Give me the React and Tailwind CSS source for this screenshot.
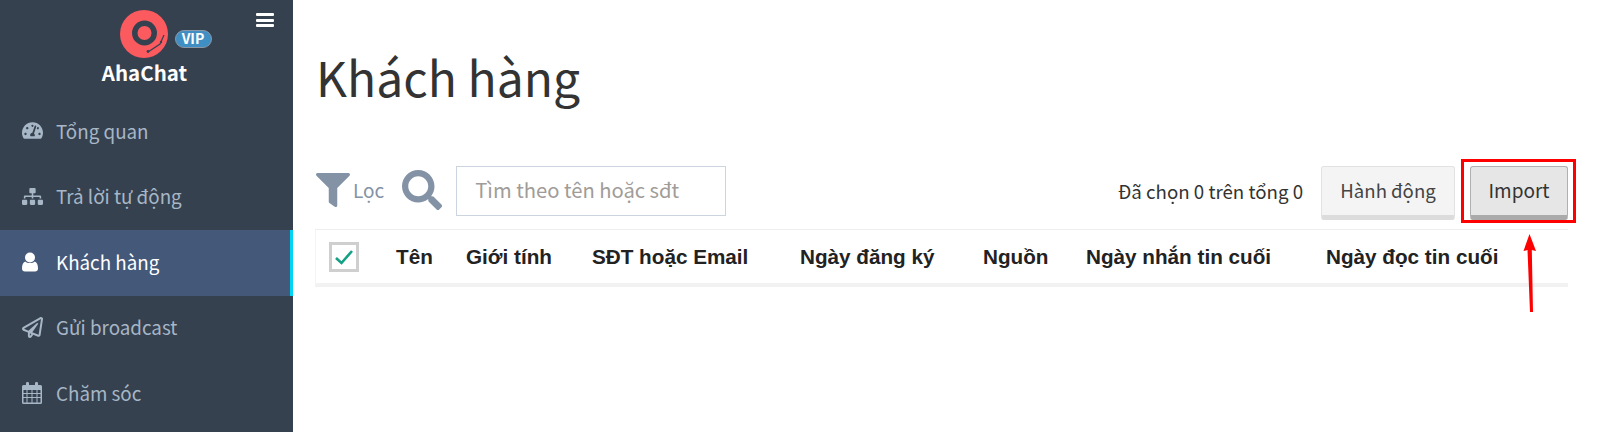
import { FaTachometerAlt, FaSitemap, FaRegPaperPlane, FaFilter, FaSearch } from 'react-icons/fa';

const UserIcon = ({ className }) => (
  <svg viewBox="0 0 16 20" className={className} fill="currentColor">
    <circle cx="8" cy="5.5" r="5" />
    <path d="M3.2 9.5 C5.5 11.6 10.5 11.6 12.8 9.5 C15 10.3 16 13 16 16.5 C16 18.6 14.8 19.5 13 19.5 L3 19.5 C1.2 19.5 0 18.6 0 16.5 C0 13 1 10.3 3.2 9.5 Z" />
  </svg>
);

const CalendarIcon = ({ className }) => (
  <svg viewBox="0 0 20 22" className={className} fill="currentColor">
    <path fillRule="evenodd" d="M1.5 3 H18.5 A1.5 1.5 0 0 1 20 4.5 V20.5 A1.5 1.5 0 0 1 18.5 22 H1.5 A1.5 1.5 0 0 1 0 20.5 V4.5 A1.5 1.5 0 0 1 1.5 3 Z M1.5 8 V11 H4.5 V8 Z M5.5 8 V11 H9.5 V8 Z M10.5 8 V11 H14.5 V8 Z M15.5 8 V11 H18.5 V8 Z M1.5 12 V15 H4.5 V12 Z M5.5 12 V15 H9.5 V12 Z M10.5 12 V15 H14.5 V12 Z M15.5 12 V15 H18.5 V12 Z M1.5 16 V20.5 H4.5 V16 Z M5.5 16 V20.5 H9.5 V16 Z M10.5 16 V20.5 H14.5 V16 Z M15.5 16 V20.5 H18.5 V16 Z" />
    <rect x="4" y="0" width="3" height="6" rx="1.2" />
    <rect x="13" y="0" width="3" height="6" rx="1.2" />
  </svg>
);

const menu = [
  { label: 'Tổng quan', icon: FaTachometerAlt },
  { label: 'Trả lời tự động', icon: FaSitemap },
  { label: 'Khách hàng', icon: UserIcon, active: true, iconSize: 'w-[16px] h-[20px]' },
  { label: 'Gửi broadcast', icon: FaRegPaperPlane },
  { label: 'Chăm sóc', icon: CalendarIcon, iconSize: 'w-[20px] h-[22px]' },
];

const columns = [
  { label: 'Tên', width: 'w-[70px]' },
  { label: 'Giới tính', width: 'w-[126px]' },
  { label: 'SĐT hoặc Email', width: 'w-[208px]' },
  { label: 'Ngày đăng ký', width: 'w-[183px]' },
  { label: 'Nguồn', width: 'w-[103px]' },
  { label: 'Ngày nhắn tin cuối', width: 'w-[240px]' },
  { label: 'Ngày đọc tin cuối', width: 'w-[240px]' },
];

const Logo = () => (
  <svg width="48" height="48" viewBox="0 0 48 48" className="shrink-0">
    <circle cx="24" cy="24" r="24" fill="#fb5a5f" />
    <circle cx="24.5" cy="23" r="9.75" fill="none" stroke="#364150" strokeWidth="5.5" />
    <path d="M44 25 L40 34 L28 42" fill="none" stroke="#364150" strokeWidth="1.2" />
    <circle cx="28" cy="41.5" r="1.4" fill="#364150" />
    <circle cx="41" cy="32" r="1.2" fill="#364150" />
  </svg>
);

const Sidebar = () => (
  <aside className="w-[293px] h-[432px] shrink-0 bg-[#364150] overflow-hidden">
    <div className="h-[102px] relative flex flex-col items-center pt-[10px]">
      <div className="flex items-start ml-[38px]">
        <Logo />
        <span className="ml-[7px] mt-[20px] w-[37px] h-[18px] leading-[14px] text-center rounded-[9px] border border-[#8a97a5] bg-[#3f8fc4] text-white text-[14px] font-bold">VIP</span>
      </div>
      <div className="mt-[-1px] mr-[4px] text-white text-[20.5px] leading-[30px] font-semibold">AhaChat</div>
      <div className="absolute top-[13px] right-[19px] w-[18px] flex flex-col gap-[2.5px]">
        <span className="h-[3px] bg-white rounded-[1px]" />
        <span className="h-[3px] bg-white rounded-[1px]" />
        <span className="h-[3px] bg-white rounded-[1px]" />
      </div>
    </div>
    <nav className="flex flex-col mt-[-3px]">
      {menu.map(item => {
        const Icon = item.icon;
        return (
          <div
            key={item.label}
            className={`h-[65.5px] flex items-center pl-[22px] pb-[2px] text-[18.8px] ${item.active ? 'bg-[#44587a] text-white border-r-[3px] border-[#00d4f5]' : 'text-[#a7b7c6]'}`}
          >
            <span className="w-[34px] shrink-0"><Icon className={item.iconSize || 'w-[21px] h-[21px]'} /></span>
            <span>{item.label}</span>
          </div>
        );
      })}
    </nav>
  </aside>
);

const Toolbar = () => (
  <div className="flex items-center h-[54px] text-[#333]">
    <FaFilter className="ml-[1px] w-[34px] h-[34px] mb-[6px] text-[#8492a6]" />
    <span className="ml-[3px] mb-[6px] text-[19px] text-[#8492a6]">Lọc</span>
    <FaSearch className="ml-[18px] mb-[6px] w-[40px] h-[40px] text-[#8492a6]" />
    <div className="ml-[14px] mb-[4px] w-[270px] h-[50px] border border-[#ccd4e0] flex items-center pl-[18px] pb-[2px] text-[20.2px] text-[#a09c98]">Tìm theo tên hoặc sđt</div>
    <span className="ml-auto mb-[3px] text-[18.7px] text-[#333]">Đã chọn 0 trên tổng 0</span>
    <button className="ml-[18px] w-[134px] h-[54px] pb-[2px] rounded-[3px] border border-[#e2e2e2] border-b-[5px] border-b-[#dcdcdc] bg-[#f4f4f4] text-[18.6px] text-[#444]">Hành động</button>
    <div className="relative ml-[15px]">
      <button className="block w-[98px] h-[54px] pb-[2px] rounded-[3px] border border-[#b0b0b0] border-b-[5px] border-b-[#aaaaaa] bg-[#e6e6e6] text-[19px] text-[#333]">Import</button>
      <div className="absolute -left-[9px] -top-[7px] -right-[8px] -bottom-[3px] border-[3px] border-[#f00]" />
    </div>
  </div>
);

const Table = () => (
  <div className="mt-[9px] h-[58px] flex items-center border-t border-t-[#eeeeee] border-b-[4px] border-b-[#f2f2f2] border-l border-l-[#f4f4f4]">
    <div className="ml-[13px] w-[30px] h-[30px] border-[3px] border-[#cfcfcf] flex items-center justify-center shrink-0">
      <svg width="20" height="16" viewBox="0 0 20 16"><path d="M2 9 L7.5 14 L18 2" fill="none" stroke="#14a085" strokeWidth="2.6" /></svg>
    </div>
    <div className="flex ml-[37px] font-['Liberation_Sans',sans-serif] font-bold text-[20.7px] text-[#222] whitespace-nowrap">
      {columns.map(col => (
        <div key={col.label} className={col.width}>{col.label}</div>
      ))}
    </div>
  </div>
);

export default function App() {
  return (
    <div className="flex w-[1600px] h-[432px] overflow-hidden bg-white font-['Noto_Sans_CJK_SC','Noto_Sans',sans-serif]">
      <Sidebar />
      <main className="flex-1 pl-[22px] pr-[32px] relative">
        <h1 className="mt-[40px] ml-[1px] text-[48px] leading-[72px] text-[#333]">Khách hàng</h1>
        <div className="mt-[54px]">
          <Toolbar />
          <Table />
        </div>
        <svg width="14" height="80" viewBox="0 0 14 80" className="absolute left-[1230px] top-[234px]">
          <path d="M6.5 0 L13 17 L8.8 16 L10 78 L7 78 L4.5 16 L0.5 17 Z" fill="#f00" />
        </svg>
      </main>
    </div>
  );
}
